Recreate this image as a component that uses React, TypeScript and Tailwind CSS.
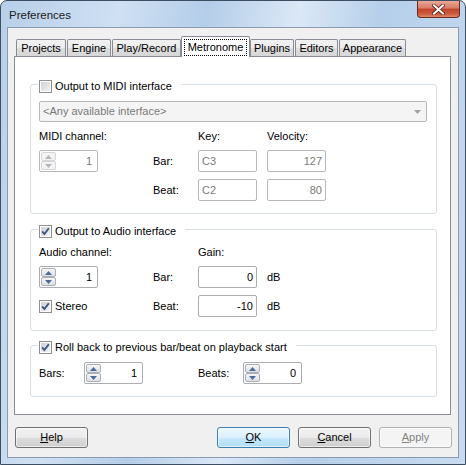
import React from "react";

type TabDef = { label: string; w: string; ml: string; active?: boolean };

const TABS: TabDef[] = [
  { label: "Projects", w: "w-[50px]", ml: "ml-0" },
  { label: "Engine", w: "w-[44px]", ml: "ml-[1px]" },
  { label: "Play/Record", w: "w-[69px]", ml: "ml-[1px]" },
  { label: "Metronome", w: "w-[69px]", ml: "ml-0", active: true },
  { label: "Plugins", w: "w-[44px]", ml: "ml-0" },
  { label: "Editors", w: "w-[43px]", ml: "ml-[1px]" },
  { label: "Appearance", w: "w-[67px]", ml: "ml-[1px]" },
];

function CheckBox({ checked }: { checked?: boolean }) {
  return (
    <span className="relative flex h-[13px] w-[13px] shrink-0 items-center justify-center border border-[#8f8f8f] bg-white">
      <span className="h-[9px] w-[9px] bg-[linear-gradient(135deg,#cdd0d5,#f4f4f5)]" />
      {checked && (
        <svg className="absolute left-0 top-0" width="11" height="11" viewBox="0 0 11 11">
          <path d="M2.2 5.4 L4.4 8 L8.8 2.2" fill="none" stroke="#3d5585" strokeWidth="1.9" />
        </svg>
      )}
    </span>
  );
}

function Arrow({ up, disabled }: { up?: boolean; disabled?: boolean }) {
  const c = disabled ? "#b4b8bd" : "#4d6a9c";
  return (
    <svg width="7" height="4" viewBox="0 0 7 4">
      <path d={up ? "M0 4 L3.5 0 L7 4 Z" : "M0 0 L3.5 4 L7 0 Z"} fill={c} />
    </svg>
  );
}

function Spin({ value, disabled }: { value: string; disabled?: boolean }) {
  const btn = disabled
    ? "border-[#d4d6d9] bg-[#f4f4f4]"
    : "border-[#a9b0b8] bg-[linear-gradient(#f6f6f6,#dedfe1)]";
  return (
    <div
      className={`flex h-[22px] w-[59px] items-stretch rounded-[2px] border bg-white p-[1px] ${
        disabled ? "border-[#b5b8bc]" : "border-[#abadb3]"
      }`}
    >
      <div className="flex w-[15px] flex-col gap-0">
        <div className={`flex h-[10px] items-center justify-center rounded-[2px] border ${btn}`}>
          <Arrow up disabled={disabled} />
        </div>
        <div className={`flex h-[10px] items-center justify-center rounded-[2px] border ${btn}`}>
          <Arrow disabled={disabled} />
        </div>
      </div>
      <div
        className={`flex flex-1 items-center justify-end pr-[4px] ${
          disabled ? "text-[#7a7a7a]" : "text-black"
        }`}
      >
        {value}
      </div>
    </div>
  );
}

function Field({
  value,
  disabled,
  right,
}: {
  value: string;
  disabled?: boolean;
  right?: boolean;
}) {
  return (
    <div
      className={`flex h-[22px] w-[59px] items-center rounded-[2px] border bg-white px-[3px] ${
        right ? "justify-end" : "justify-start"
      } ${disabled ? "border-[#b5b8bc] text-[#7a7a7a]" : "border-[#abadb3] text-black"}`}
    >
      {value}
    </div>
  );
}

function Group({
  title,
  checked,
  className,
  children,
}: {
  title: string;
  checked?: boolean;
  className?: string;
  children: React.ReactNode;
}) {
  return (
    <fieldset className={`rounded-[3px] border border-[#d5dfe5] px-0 ${className ?? ""}`}>
      <legend className="ml-[7px] flex h-[18px] items-center gap-[3px] pl-[1px] pr-[9px] pt-[5px]">
        <CheckBox checked={checked} />
        <span className="leading-[13px]">{title}</span>
      </legend>
      {children}
    </fieldset>
  );
}

function Button({
  label,
  ul,
  kind,
}: {
  label: string;
  ul: string;
  kind?: "default" | "disabled";
}) {
  const rest = label.slice(1);
  const style =
    kind === "default"
      ? "border-[#3c7fb1] bg-[linear-gradient(#ecf7fd_0%,#dbf0fc_50%,#c4e8fd_51%,#b2def7_100%)] text-black"
      : kind === "disabled"
      ? "border-[#adb2b5] bg-[#f4f4f4] text-[#838383]"
      : "border-[#707070] bg-[linear-gradient(#f2f2f2_0%,#ebebeb_50%,#dddddd_51%,#cfcfcf_100%)] text-black";
  return (
    <button
      className={`flex h-[21px] w-[73px] items-center justify-center rounded-[3px] border shadow-[inset_0_0_0_1px_rgba(255,255,255,0.6)] ${style}`}
    >
      <span>
        <span className="underline underline-offset-[1px]">{ul}</span>
        {rest}
      </span>
    </button>
  );
}

export default function App() {
  return (
    <div className="h-[465px] w-[466px] bg-white font-['Liberation_Sans',Arial,sans-serif] text-[11px] leading-[13px] text-black">
      <div className="flex h-full w-full flex-col rounded-t-[7px] border border-[#3e4e62] bg-[linear-gradient(100deg,#b7cfe9_0%,#cfe0f3_22%,#b4cde9_38%,#dbe8f6_55%,#b6cfea_70%,#c8dbf0_100%)]">
        {/* title bar */}
        <div className="flex h-[26px] items-start">
          <div className="ml-[8px] mt-[7px] text-[11.5px] leading-[14px] text-[#1b1b1b]">Preferences</div>
          <div className="ml-auto mr-[5px] flex h-[17px] w-[43px] items-center justify-center rounded-b-[4px] border border-t-0 border-[#6b2a22] bg-[linear-gradient(#e9a897_0%,#d77b66_45%,#c0432b_50%,#cc5a3f_80%,#e08a68_100%)]">
            <svg width="13" height="11" viewBox="0 0 13 11">
              <path d="M2 1.5 L11 9.5 M11 1.5 L2 9.5" stroke="#5a1e16" strokeWidth="3.6" strokeLinecap="square" />
              <path d="M2 1.5 L11 9.5 M11 1.5 L2 9.5" stroke="#ffffff" strokeWidth="2" strokeLinecap="square" />
            </svg>
          </div>
        </div>

        {/* client area */}
        <div className="ml-[6px] flex h-[431px] w-[452px] flex-col border border-[#8d9bb0] bg-[#f0f0f0]">
          <div className="ml-[6px] mt-[8px] w-[437px]">
            {/* tabs */}
            <div className="flex h-[20px] items-end pl-[2px]">
              {TABS.map((t) =>
                t.active ? (
                  <div
                    key={t.label}
                    className={`relative z-10 -mb-[1px] flex h-[21px] items-start justify-center rounded-t-[2px] border border-b-0 border-[#898c95] bg-white pt-[2px] ${t.w} ${t.ml}`}
                  >
                    <span className="flex h-[17px] w-[63px] items-center justify-center border border-dotted border-black">
                      {t.label}
                    </span>
                  </div>
                ) : (
                  <div
                    key={t.label}
                    className={`flex h-[17px] items-center justify-center rounded-t-[2px] border border-b-0 border-[#898c95] bg-[linear-gradient(#f2f2f2_0%,#ebebeb_50%,#dddddd_51%,#d7d7d7_100%)] pt-[1px] ${t.w} ${t.ml}`}
                  >
                    {t.label}
                  </div>
                )
              )}
            </div>

            {/* panel */}
            <div className="flex h-[359px] flex-col border border-[#898c95] bg-white pl-[15px] pr-[13px] pt-[18px]">
              <Group title="Output to MIDI interface">
                <div className="px-[8px] pb-[12px] pt-[8px]">
                  <div className="flex h-[21px] w-[388px] items-center justify-between rounded-[2px] border border-[#b5b8bc] bg-[#f4f4f4] pl-[3px] pr-[5px] text-[#7a7a7a]">
                    <span>&lt;Any available interface&gt;</span>
                    <svg width="7" height="4" viewBox="0 0 7 4">
                      <path d="M0 0 L3.5 4 L7 0 Z" fill="#a2a2a2" />
                    </svg>
                  </div>
                  <div className="mt-[8px] grid grid-cols-[114px_45px_69px_59px] items-center gap-y-[7px]">
                    <div className="col-span-2 h-[13px]">MIDI channel:</div>
                    <div>Key:</div>
                    <div>Velocity:</div>
                    <Spin value="1" disabled />
                    <div>Bar:</div>
                    <Field value="C3" disabled />
                    <Field value="127" disabled right />
                    <div />
                    <div>Beat:</div>
                    <Field value="C2" disabled />
                    <Field value="80" disabled right />
                  </div>
                </div>
              </Group>

              <Group title="Output to Audio interface" checked className="mt-[6px]">
                <div className="px-[8px] pb-[13px] pt-[8px]">
                  <div className="grid grid-cols-[114px_45px_69px_59px] items-center gap-y-[7px]">
                    <div className="col-span-2 h-[13px]">Audio channel:</div>
                    <div className="col-span-2">Gain:</div>
                    <Spin value="1" />
                    <div>Bar:</div>
                    <Field value="0" right />
                    <div>dB</div>
                    <div className="flex items-center gap-[3px]">
                      <CheckBox checked />
                      <span>Stereo</span>
                    </div>
                    <div>Beat:</div>
                    <Field value="-10" right />
                    <div>dB</div>
                  </div>
                </div>
              </Group>

              <Group title="Roll back to previous bar/beat on playback start" checked className="mt-[5px]">
                <div className="px-[8px] pb-[12px] pt-[8px]">
                  <div className="grid grid-cols-[45px_114px_45px_59px] items-center">
                    <div>Bars:</div>
                    <Spin value="1" />
                    <div>Beats:</div>
                    <Spin value="0" />
                  </div>
                </div>
              </Group>
            </div>
          </div>

          {/* buttons */}
          <div className="mt-[12px] flex items-center pl-[7px] pr-[6px]">
            <Button label="Help" ul="H" />
            <div className="ml-auto flex gap-[8px]">
              <Button label="OK" ul="O" kind="default" />
              <Button label="Cancel" ul="C" />
              <Button label="Apply" ul="A" kind="disabled" />
            </div>
          </div>
        </div>
      </div>
    </div>
  );
}
